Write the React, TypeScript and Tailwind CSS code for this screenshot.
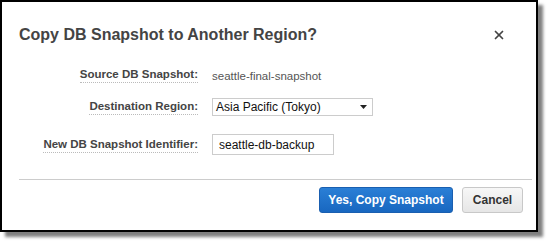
import { X } from "lucide-react";

const rows = [
  { label: "Source DB Snapshot:", kind: "text", value: "seattle-final-snapshot", gap: "" },
  { label: "Destination Region:", kind: "select", value: "Asia Pacific (Tokyo)", gap: "mt-[11px]" },
  { label: "New DB Snapshot Identifier:", kind: "input", value: "seattle-db-backup", gap: "mt-[18px]" },
];

const App = () => {
  return (
    <div className="w-[550px] h-[243px] bg-white font-['Liberation_Sans',Arial,sans-serif]">
      <div className="w-[538px] h-[232px] border-2 border-black bg-white shadow-[5px_5px_3px_rgba(0,0,0,0.5)] flex flex-col">
        {/* header */}
        <div className="flex items-center justify-between pl-[17px] pr-[30px] pt-[23px]">
          <h1 className="text-[16px] leading-[20px] font-bold text-[#444]">
            Copy DB Snapshot to Another Region?
          </h1>
          <X className="w-[14px] h-[14px] text-[#444]" strokeWidth={3} />
        </div>

        {/* form */}
        <div className="mt-[18px] grid grid-cols-[196px_1fr] gap-x-[14px] items-center">
          {rows.map((row, i) => (
            <div key={i} className="contents">
              <div className={`flex justify-end ${row.gap}`}>
                <span className="text-[11.5px] leading-[14px] font-bold text-[#444] border-b border-dotted border-[#bbb] pb-[1px]">
                  {row.label}
                </span>
              </div>
              <div className={row.gap}>
                {row.kind === "text" && (
                  <span className="text-[11.5px] leading-[16px] text-[#555]">{row.value}</span>
                )}
                {row.kind === "select" && (
                  <div className="w-[161px] h-[18px] border border-[#ccc] bg-white flex items-center justify-between pl-[3px] pr-[5px]">
                    <span className="text-[12px] leading-[14px] text-[#111]">{row.value}</span>
                    <svg width="7" height="4" viewBox="0 0 7 4">
                      <path d="M0 0 L7 0 L3.5 4 Z" fill="#222" />
                    </svg>
                  </div>
                )}
                {row.kind === "input" && (
                  <div className="w-[122px] h-[21px] border border-[#ccc] bg-white flex items-center pl-[6px]">
                    <span className="text-[12px] leading-[14px] text-[#111]">{row.value}</span>
                  </div>
                )}
              </div>
            </div>
          ))}
        </div>

        {/* footer */}
        <div className="mt-auto ml-[17px] mr-[4px] border-t border-[#ccc]" />
        <div className="flex justify-end gap-[9px] pt-[7px] pb-[17px] pr-[13px]">
          <button className="w-[134px] h-[26px] rounded-[3px] bg-gradient-to-b from-[#2a7fd6] to-[#1867c0] border border-[#1a5fb0] text-white text-[12px] font-bold">
            Yes, Copy Snapshot
          </button>
          <button className="w-[61px] h-[26px] rounded-[3px] bg-gradient-to-b from-[#f7f7f7] to-[#e6e6e6] border border-[#c8c8c8] text-[#333] text-[12px] font-bold">
            Cancel
          </button>
        </div>
      </div>
    </div>
  );
};

export default App;
